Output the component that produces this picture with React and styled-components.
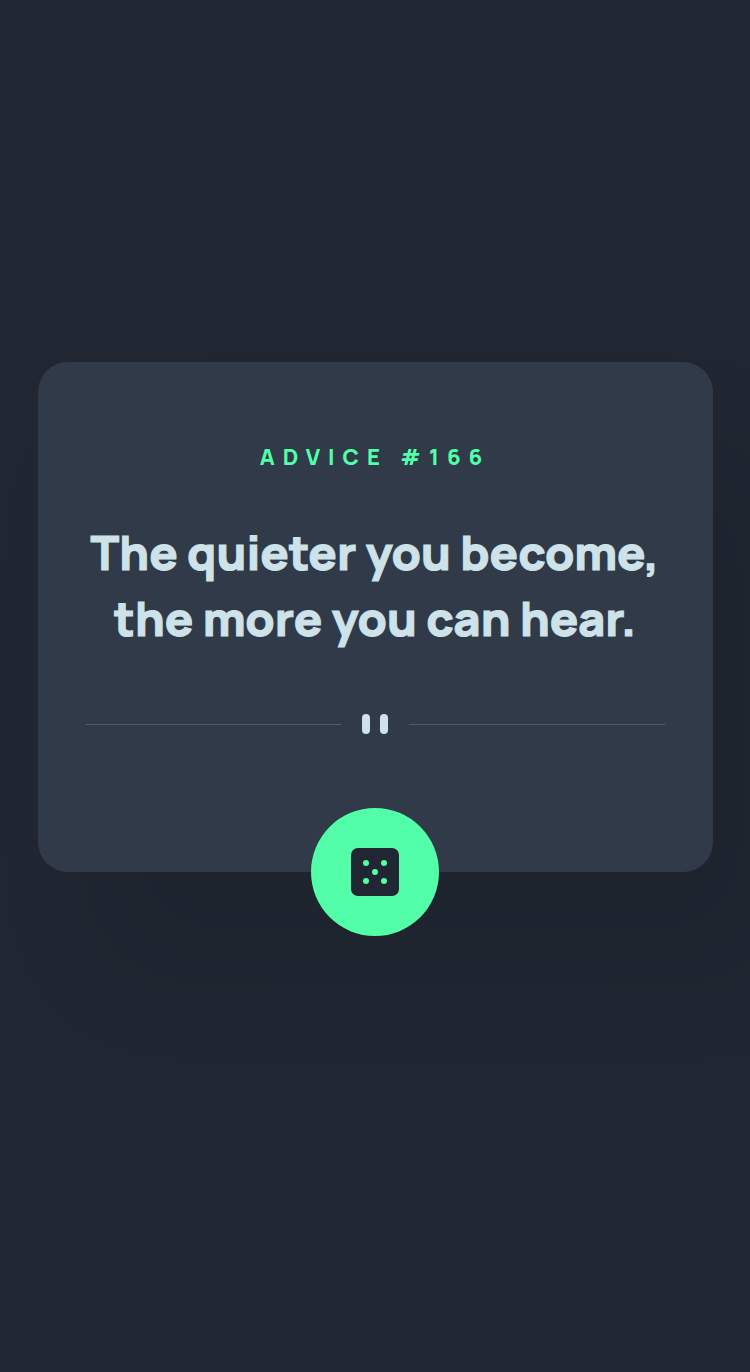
import React from "react";
import styled, { createGlobalStyle } from "styled-components";

const GlobalStyle = createGlobalStyle`
  *, *::before, *::after { box-sizing: border-box; }
  body {
    margin: 0;
    background: #202732;
    font-family: Manrope, Inter, "Liberation Sans", sans-serif;
    font-weight: 800;
  }
`;

const Page = styled.main`
  display: flex;
  align-items: center;
  justify-content: center;
  min-height: 100vh;
  padding-bottom: 138px;
  overflow: hidden;
`;

const Card = styled.article`
  display: flex;
  flex-direction: column;
  align-items: center;
  width: 90%;
  padding: 78px 48px 0;
  border-radius: 30px;
  background: #313a48;
  box-shadow: 64px 92px 120px rgba(0, 0, 0, 0.08);
`;

const Label = styled.h1`
  margin: 0 0 45px;
  color: #52ffa8;
  font-size: 22px;
  font-weight: 800;
  line-height: 34px;
  letter-spacing: 8px;
  text-transform: uppercase;
`;

const Quote = styled.p`
  margin: 0 0 63px;
  color: #cee3e9;
  font-size: 47px;
  font-weight: 800;
  line-height: 66px;
  text-align: center;
  text-wrap: balance;
  -webkit-text-stroke: 1px currentColor;
`;

const Divider = styled.div`
  display: flex;
  align-items: center;
  gap: 21px;
  width: 100%;
  margin-bottom: 74px;
`;

const Line = styled.span`
  flex: 1;
  height: 1px;
  background: #4f5d74;
`;

const Bars = styled.span`
  display: flex;
  gap: 10px;
`;

const Bar = styled.span`
  width: 8px;
  height: 20px;
  border-radius: 4px;
  background: #cee3e9;
`;

const DiceButton = styled.button`
  display: grid;
  place-items: center;
  width: 128px;
  height: 128px;
  margin: 0 0 -64px;
  padding: 0;
  border: 0;
  border-radius: 50%;
  background: #52ffa8;
  cursor: pointer;

  &:hover { box-shadow: 0 0 40px #52ffa8; }
`;

function DiceIcon() {
  return (
    <svg width="48" height="48" viewBox="0 0 48 48" aria-hidden="true">
      <rect width="48" height="48" rx="7" fill="#202732" />
      <g fill="#52ffa8">
        <circle cx="15" cy="15" r="3" />
        <circle cx="33" cy="15" r="3" />
        <circle cx="24" cy="24" r="3" />
        <circle cx="15" cy="33" r="3" />
        <circle cx="33" cy="33" r="3" />
      </g>
    </svg>
  );
}

export default function App() {
  return (
    <>
      <GlobalStyle />
      <Page>
        <Card>
          <Label>Advice #166</Label>
          <Quote>The quieter you become, the more you can hear.</Quote>
          <Divider>
            <Line />
            <Bars>
              <Bar />
              <Bar />
            </Bars>
            <Line />
          </Divider>
          <DiceButton type="button" aria-label="New advice">
            <DiceIcon />
          </DiceButton>
        </Card>
      </Page>
    </>
  );
}
